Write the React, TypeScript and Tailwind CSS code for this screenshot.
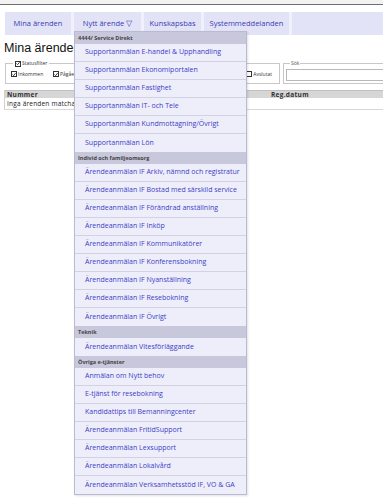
import React from "react";

type Group = { title: string; items: string[] };

const groups: Group[] = [
  {
    title: "4444/ Service Direkt",
    items: [
      "Supportanmälan E-handel & Upphandling",
      "Supportanmälan Ekonomiportalen",
      "Supportanmälan Fastighet",
      "Supportanmälan IT- och Tele",
      "Supportanmälan Kundmottagning/Övrigt",
      "Supportanmälan Lön",
    ],
  },
  {
    title: "Individ och familjeomsorg",
    items: [
      "Ärendeanmälan IF Arkiv, nämnd och registratur",
      "Ärendeanmälan IF Bostad med särskild service",
      "Ärendeanmälan IF Förändrad anställning",
      "Ärendeanmälan IF Inköp",
      "Ärendeanmälan IF Kommunikatörer",
      "Ärendeanmälan IF Konferensbokning",
      "Ärendeanmälan IF Nyanställning",
      "Ärendeanmälan IF Resebokning",
      "Ärendeanmälan IF Övrigt",
    ],
  },
  {
    title: "Teknik",
    items: ["Ärendeanmälan Vitesförläggande"],
  },
  {
    title: "Övriga e-tjänster",
    items: [
      "Anmälan om Nytt behov",
      "E-tjänst för resebokning",
      "Kandidattips till Bemanningcenter",
      "Ärendeanmälan FritidSupport",
      "Ärendeanmälan Lexsupport",
      "Ärendeanmälan Lokalvård",
      "Ärendeanmälan Verksamhetsstöd IF, VO & GA",
    ],
  },
];

const tabs = [
  { label: "Mina ärenden", w: "w-[66px]" },
  { label: "Nytt ärende ▽", w: "w-[67px]" },
  { label: "Kunskapsbas", w: "w-[57px]" },
  { label: "Systemmeddelanden", w: "w-[85px]" },
];

const Check: React.FC<{ checked?: boolean }> = ({ checked }) => (
  <span className="w-[6px] h-[6px] border border-[#333] bg-white flex items-center justify-center shrink-0">
    {checked && (
      <svg width="5" height="5" viewBox="0 0 5 5">
        <path d="M0.6 2.5 L2 3.9 L4.5 0.8" stroke="#111" strokeWidth="1" fill="none" />
      </svg>
    )}
  </span>
);

const App: React.FC = () => {
  return (
    <div className="w-[383px] h-[504px] bg-white relative overflow-hidden font-['Open_Sans',sans-serif]">
      {/* top strip */}
      <div className="h-[5px] bg-[#f2f2f2] border-b border-[#6f6f6f]" />

      {/* tab bar */}
      <div className="mt-[7px] ml-[5px] h-[23px] flex gap-[3px] bg-[#f1f1fb]">
        {tabs.map((t) => (
          <div
            key={t.label}
            className={`${t.w} bg-[#e3e3f7] flex items-center justify-center text-[7.5px] text-[#3b3bb0]`}
          >
            {t.label}
          </div>
        ))}
        <div className="flex-1 bg-[#e3e3f7]" />
      </div>

      {/* title */}
      <div className="ml-[4px] mt-[5px] text-[12.5px] leading-[16px] text-[#111] font-['Liberation_Sans',sans-serif]">
        Mina ärenden
      </div>

      {/* filters */}
      <div className="flex mt-[4px] ml-[5px] gap-[3px]">
        <fieldset className="w-[275px] h-[24px] border border-[#c8c8c8] px-[5px]">
          <legend className="px-[2px] flex items-center gap-[1px] text-[5px] text-[#333] ml-[2px]">
            <Check checked />
            <span>Statusfilter</span>
          </legend>
          <div className="flex items-center text-[5px] text-[#333] mt-[3px] gap-[1px]">
            <Check checked />
            <span className="w-[34px]">Inkommen</span>
            <Check checked />
            <span className="flex-1">Pågående</span>
            <Check />
            <span className="mr-[2px]">Avslutat</span>
          </div>
        </fieldset>
        <fieldset className="flex-1 h-[24px] border border-[#c8c8c8] border-r-0 pl-[2px]">
          <legend className="ml-[4px] px-[1px] text-[5px] text-[#555]">Sök</legend>
          <div className="h-[12px] mt-[1px] border border-[#b8b8b8] border-r-0 bg-white" />
        </fieldset>
      </div>

      {/* table */}
      <div className="ml-[4px] mt-[6px] border-l border-[#d0d0d0]">
        <div className="h-[8px] bg-[#d6d6d6] border-t border-[#c0c0c0] flex items-center text-[6.5px] font-bold text-[#333] tracking-[0.3px]">
          <span className="pl-[2px] w-[266px]">Nummer</span>
          <span>Reg.datum</span>
        </div>
        <div className="h-[12px] border-b border-[#d8d8d8] flex items-center pl-[2px] text-[6.5px] text-[#222] tracking-[0.2px]">
          Inga ärenden matchar
        </div>
      </div>

      {/* dropdown menu */}
      <div className="absolute left-[74px] top-[31px] w-[173px] border border-[#babad2] bg-[#eeeefb] shadow-[1px_1px_2px_rgba(0,0,0,0.12)]">
        {groups.map((g) => (
          <div key={g.title}>
            <div className="h-[12px] bg-[#c8c8dd] flex items-center pl-[3px] text-[5.5px] font-bold text-[#444]">
              {g.title}
            </div>
            {g.items.map((it, i) => (
              <div
                key={it}
                className={`h-[18px] flex items-center pl-[10px] text-[7px] text-[#3d3dc4] ${
                  i < g.items.length - 1 ? "border-b border-[#d2d2e2]" : ""
                }`}
              >
                {it}
              </div>
            ))}
          </div>
        ))}
      </div>
    </div>
  );
};

export default App;
